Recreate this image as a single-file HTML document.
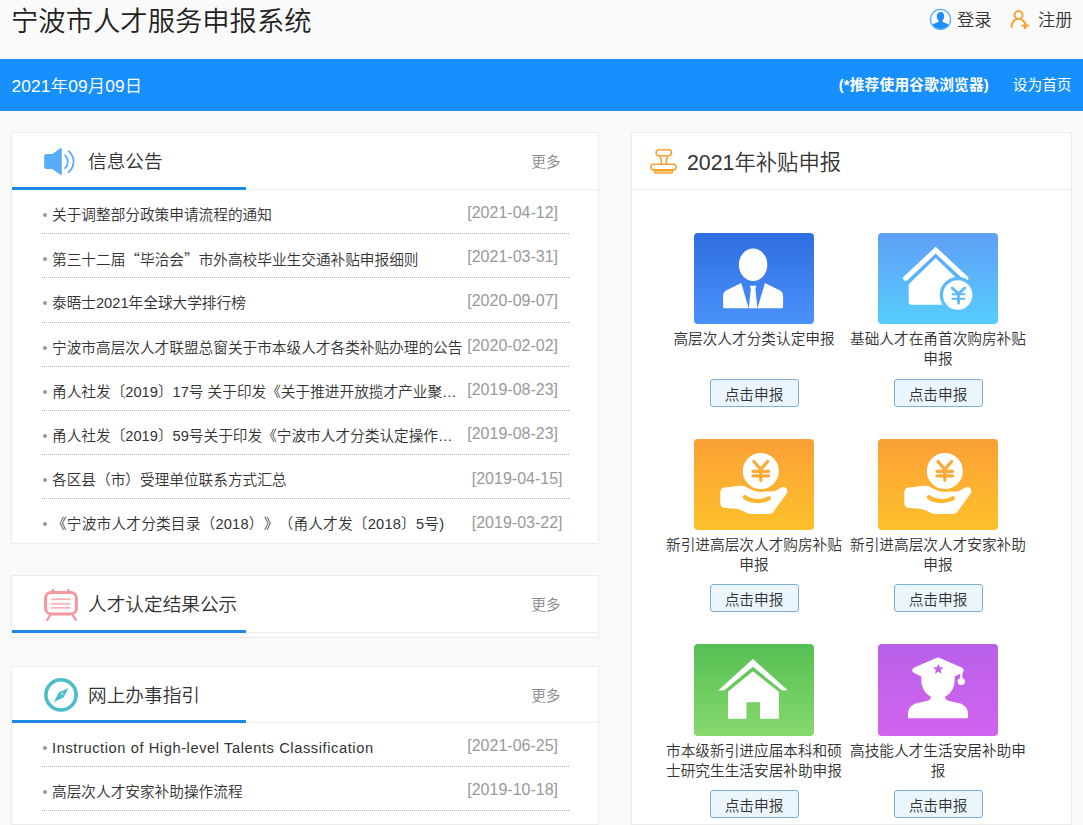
<!DOCTYPE html>
<html lang="zh-CN">
<head>
<meta charset="utf-8">
<title>宁波市人才服务申报系统</title>
<style>
*{box-sizing:border-box;margin:0;padding:0}
html,body{width:1083px;height:825px;overflow:hidden}
body{background:#fafafa;font-family:"Liberation Sans","Noto Sans CJK SC",sans-serif;color:#333;position:relative;font-weight:350;text-spacing-trim:space-all}
.cjk{font-family:"Noto Sans CJK SC",sans-serif}
a{color:inherit;text-decoration:none}
ul{list-style:none}

/* top header */
.top{position:absolute;left:0;top:0;width:1083px;height:59px}
.top h1{position:absolute;left:11px;top:2px;font-size:27.33px;font-weight:350;line-height:40px;color:#222;white-space:nowrap}
.top .acts{position:absolute;right:0;top:0;height:40px}
.top .act{position:absolute;top:8px;height:24px;font-size:17.33px;line-height:24px;color:#333;white-space:nowrap}
.top .act svg{position:absolute;left:0;top:0}

/* blue bar */
.bar{position:absolute;left:0;top:59px;width:1083px;height:52px;background:#1790fe;color:#fff;font-size:16px;line-height:52px}
.bar .date{position:absolute;left:11.500px;top:1px;font-size:17.33px;letter-spacing:.15px}
.bar .tip{position:absolute;right:94px;top:0;font-size:14.67px;font-weight:700;letter-spacing:.25px}
.bar .home{position:absolute;right:11.500px;top:0;font-size:14.67px;font-weight:400}

/* panels */
.panel{position:absolute;background:#fff;border:1px solid #ececec}
.panel .hd{position:relative;height:57px;border-bottom:1px solid #ececec}
.panel .hd .ico{position:absolute;left:31px;top:13px}
.panel .hd h2{position:absolute;left:76px;top:1px;font-size:18.67px;font-weight:350;line-height:56px;color:#333;white-space:nowrap}
.panel .hd .more{position:absolute;right:37.5px;top:1px;font-size:14.67px;line-height:56px;color:#888}
.panel .hd .ul{position:absolute;left:0;bottom:-1px;width:234px;height:3px;background:#1e88e5}

.list{margin:0 29px 0 30px}
.list li{position:relative;height:44.18px;border-bottom:1px dotted #b0b0b0;font-size:14.67px;line-height:20px;color:#333;white-space:nowrap}
.list.trim li:last-child{border-bottom:none}
.list li .dot{position:absolute;left:1px;top:23px;width:4px;height:4px;border-radius:50%;background:#999}
.list li .t{position:absolute;left:10px;top:15px;max-width:412px;overflow:hidden;text-overflow:ellipsis}
.list li .d{position:absolute;right:11px;top:13px;font-size:16px;color:#999}

/* right */
.right .hd h2{left:55px;top:2px;font-size:21.33px}
.right .hd .ico{left:17px;top:14px}
.card{position:absolute;width:184px;text-align:center}
.card .img{display:block;margin:0 auto;width:120px;height:91px;border-radius:4px;position:relative;overflow:hidden}
.card .img svg{position:absolute;left:0;top:0}
.card .lb{display:block;margin-top:5px;font-size:14.67px;line-height:20px;color:#333;height:40px}
.card .btn{display:block;margin:9px auto 0;width:89px;height:28px;border:1px solid #7eaed6;border-radius:3px;background:#eaf5fd;font-size:14.67px;line-height:30px;color:#333}
</style>
</head>
<body>

<div class="top">
  <h1>宁波市人才服务申报系统</h1>
  <a class="act" style="left:929px;padding-left:28px"><svg width="23" height="23" viewBox="0 0 23 23" style="top:0"><defs><clipPath id="cpu"><circle cx="11.5" cy="11.4" r="9.6"/></clipPath></defs><circle cx="11.5" cy="11.4" r="10" fill="#fff" stroke="#5aaefc" stroke-width="1.3"/><g clip-path="url(#cpu)" fill="#1e8ffb"><ellipse cx="11.5" cy="8.2" rx="3.7" ry="4.3"/><path d="M9.6 11.2h3.8v1.6c0 .9.5 1.4 1.6 1.8l2.6 1c1.3.5 2 1.3 2.2 2.6l.4 3.8H2.800l.4-3.800c.2-1.300.9-2.100 2.200-2.600l2.600-1c1.100-.4 1.600-.9 1.600-1.800z"/></g></svg>登录</a>
  <a class="act" style="left:1010px;padding-left:28px"><svg width="20.5" height="20.5" viewBox="0 0 22 22" style="top:.5px" fill="none" stroke="#f5a540" stroke-width="2.2" stroke-linecap="round"><circle cx="9.200" cy="6.400" r="4.300"/><path d="M1.600 19.300c.3-4.400 2.600-7.300 5.400-8.300M11.500 11c1.800.6 3.200 1.800 4.200 3.500"/><path d="M16.200 14.800v6M13.200 17.800h6" stroke-width="2.400"/></svg>注册</a>
</div>

<div class="bar">
  <span class="date">2021年09月09日</span>
  <span class="tip">(*推荐使用谷歌浏览器)</span>
  <a class="home">设为首页</a>
</div>

<!-- 信息公告 -->
<div class="panel" style="left:11px;top:132px;width:588px;height:412px">
  <div class="hd">
    <span class="ico" style="left:31px;top:14px"><svg width="34" height="30" viewBox="0 0 34 30"><path d="M1.100 9.400c0-1.500.8-2.400 2.300-2.400h5.800l8.200-5.700c.8-.5 1.400-.2 1.400.8v24.800c0 1-.6 1.300-1.400.8l-8.200-5.700H3.400c-1.500 0-2.300-.9-2.300-2.400z" fill="#5aacf9"/><path d="M22 8.200c3.800 3.600 3.800 9.400 0 13" fill="none" stroke="#5aacf9" stroke-width="1.700" stroke-linecap="round"/><path d="M25.600 4.200c6.600 6 6.600 15 0 21" fill="none" stroke="#5aacf9" stroke-width="1.800" stroke-linecap="round"/></svg></span>
    <h2>信息公告</h2>
    <a class="more">更多</a>
    <i class="ul"></i>
  </div>
  <ul class="list trim">
    <li><i class="dot"></i><a class="t">关于调整部分政策申请流程的通知</a><span class="d">[2021-04-12]</span></li>
    <li><i class="dot"></i><a class="t">第三十二届<span class="cjk">“</span>毕洽会<span class="cjk">”</span>市外高校毕业生交通补贴申报细则</a><span class="d">[2021-03-31]</span></li>
    <li><i class="dot"></i><a class="t">泰晤士2021年全球大学排行榜</a><span class="d">[2020-09-07]</span></li>
    <li><i class="dot"></i><a class="t">宁波市高层次人才联盟总窗关于市本级人才各类补贴办理的公告</a><span class="d">[2020-02-02]</span></li>
    <li><i class="dot"></i><a class="t">甬人社发〔2019〕17号 关于印发《关于推进开放揽才产业聚智的若干意见》的通知</a><span class="d">[2019-08-23]</span></li>
    <li><i class="dot"></i><a class="t">甬人社发〔2019〕59号关于印发《宁波市人才分类认定操作细则》的通知</a><span class="d">[2019-08-23]</span></li>
    <li><i class="dot"></i><a class="t">各区县（市）受理单位联系方式汇总</a><span class="d" style="right:6.5px;top:14px">[2019-04-15]</span></li>
    <li><i class="dot"></i><a class="t" style="letter-spacing:.2px">《宁波市人才分类目录（2018）》（甬人才发〔2018〕5号)</a><span class="d" style="right:6.5px;top:14px">[2019-03-22]</span></li>
  </ul>
</div>

<!-- 人才认定结果公示 -->
<div class="panel" style="left:11px;top:575px;width:588px;height:63px">
  <div class="hd">
    <span class="ico" style="left:31px;top:12px"><svg width="38" height="36" viewBox="0 0 38 36" fill="none" stroke="#f4979f" stroke-linecap="round"><rect x="2.600" y="4.500" width="30.800" height="21.400" rx="5.500" stroke-width="3"/><path d="M10 3.200V2.300M25.500 3.200V2.300" stroke-width="2.600"/><path d="M7.300 27.200L4.200 31.800M29.800 27.200l3 4.600" stroke-width="2.200"/><path d="M8.600 11.200h18.400M8.600 15.800h18.400M8.600 19.900h18.400" stroke-width="1.300"/></svg></span>
    <h2>人才认定结果公示</h2>
    <a class="more">更多</a>
    <i class="ul"></i>
  </div>
</div>

<!-- 网上办事指引 -->
<div class="panel" style="left:11px;top:666px;width:588px;height:159px">
  <div class="hd" style="height:56px">
    <span class="ico" style="left:31px;top:10px"><svg width="38" height="36" viewBox="0 0 38 36"><circle cx="18" cy="17.900" r="15.100" fill="none" stroke="#4bbccb" stroke-width="3.600"/><path d="M25.300 10.900L20.600 20.400 10.900 25 15.800 15.400z" fill="#4bbccb"/><circle cx="19.200" cy="16.800" r="1" fill="#d9fbff"/></svg></span>
    <h2>网上办事指引</h2>
    <a class="more">更多</a>
    <i class="ul"></i>
  </div>
  <ul class="list">
    <li><i class="dot"></i><a class="t" style="letter-spacing:.58px">Instruction of High-level Talents Classification</a><span class="d">[2021-06-25]</span></li>
    <li><i class="dot"></i><a class="t">高层次人才安家补助操作流程</a><span class="d">[2019-10-18]</span></li>
  </ul>
</div>

<!-- 2021年补贴申报 -->
<div class="panel right" style="left:631px;top:132px;width:441px;height:693px">
  <div class="hd">
    <span class="ico" style="left:16px;top:14px"><svg width="34" height="30" viewBox="0 0 34 30" fill="none" stroke="#f7a136" stroke-width="1.600" stroke-linejoin="round"><path d="M6.200 23.700h18.600l-.9 2.500H7.100z" fill="#fdd98c" stroke-width="1.300"/><rect x="8.100" y="2.800" width="15.400" height="5.900" rx="2.900"/><path d="M11.600 8.900c1 1.500 1.700 2.600 1.700 4.600v3.400M20 8.900c-1 1.500-1.700 2.600-1.700 4.600v3.400"/><rect x="2.800" y="17.200" width="25.300" height="5.700" rx="2.800"/></svg></span>
    <h2>2021年补贴申报</h2>
  </div>
  <div class="card" style="left:30px;top:100px"><span class="img" style="background:linear-gradient(#2f6de0,#4a92fb)"><svg width="120" height="91" viewBox="0 0 120 91" fill="#fff"><ellipse cx="59.100" cy="31.700" rx="14.200" ry="16.300"/><path d="M47.300 50L54.600 75.200H30.600c-1 0-1.500-.5-1.500-1.500V63c0-3 1.300-4.800 4-6z"/><path d="M70.900 50L63.600 75.200h24c1 0 1.500-.5 1.500-1.500V63c0-3-1.300-4.800-4-6z"/><path d="M55.900 52.700h6.400l-.9 3.300 2 19.200h-8.600l2-19.200z"/></svg></span><span class="lb">高层次人才分类认定申报</span><a class="btn" style="margin-top:10px">点击申报</a></div>
  <div class="card" style="left:214px;top:100px"><span class="img" style="background:linear-gradient(#5f9ff8,#56cdfb)"><svg width="120" height="91" viewBox="0 0 120 91"><defs><mask id="mk2"><rect width="120" height="91" fill="#fff"/><circle cx="79.700" cy="62" r="18" fill="#000"/></mask></defs><g mask="url(#mk2)"><path d="M27.600 45.300L57.700 17.200 87.900 45.300" fill="none" stroke="#fff" stroke-width="5" stroke-linecap="round" stroke-linejoin="miter"/><path d="M57.700 25L84.700 51.300V69.300c0 1.600-.8 2.400-2.400 2.400H33.100c-1.600 0-2.400-.8-2.400-2.400V51.300z" fill="#fff"/></g><circle cx="79.700" cy="62" r="14.700" fill="#fff"/><path d="M74.200 54.900L80.500 60.600 86.800 54.900M80.500 60.600V70.200" fill="none" stroke="#58b8f9" stroke-width="2.700" stroke-linecap="round"/><path d="M74.500 61.200h12M74.500 65.800h12" fill="none" stroke="#58b8f9" stroke-width="2" stroke-linecap="round"/></svg></span><span class="lb">基础人才在甬首次购房补贴申报</span><a class="btn" style="margin-top:10px">点击申报</a></div>
  <div class="card" style="left:30px;top:306px"><span class="img" style="background:linear-gradient(#fba036,#fdc12b)"><svg width="120" height="91" viewBox="0 0 120 91"><defs><mask id="mkH"><rect width="120" height="91" fill="#fff"/><circle cx="66.800" cy="32" r="20.700" fill="#000"/><path d="M50.800 58.300c6.500 4.600 16.500 5 24 1" fill="none" stroke="#000" stroke-width="4.200" stroke-linecap="round"/></mask></defs><path mask="url(#mkH)" d="M26.300 54c0-3.300 1.500-5 4.700-5.400l15-1.800c3-.3 5 .3 7 1.700l9 4h18l6.500-3.600c2-1.300 4-1.400 5.700.4 1.500 1.600 1.600 3.400.5 5.200L80 72c-1.300 2.100-3 3-5.500 3H58c-3 0-5.500-1-8-2.400-3.500-2-7-2.900-11-3.100l-8-.5c-3.200-.3-4.700-1.800-4.700-5z" fill="#fff"/><circle cx="66.800" cy="32" r="18" fill="#fff"/><path d="M60 22.500L66.800 30.500 73.600 22.500M66.800 30.500V41.300M59 32.300h15.600M59 36.800h15.600" fill="none" stroke="#fcaa33" stroke-width="3.200" stroke-linecap="round"/></svg></span><span class="lb">新引进高层次人才购房补贴申报</span><a class="btn">点击申报</a></div>
  <div class="card" style="left:214px;top:306px"><span class="img" style="background:linear-gradient(#fba036,#fdc12b)"><svg width="120" height="91" viewBox="0 0 120 91"><defs><mask id="mkH2"><rect width="120" height="91" fill="#fff"/><circle cx="66.800" cy="32" r="20.700" fill="#000"/><path d="M50.800 58.300c6.500 4.600 16.500 5 24 1" fill="none" stroke="#000" stroke-width="4.200" stroke-linecap="round"/></mask></defs><path mask="url(#mkH2)" d="M26.300 54c0-3.300 1.500-5 4.700-5.400l15-1.800c3-.3 5 .3 7 1.700l9 4h18l6.500-3.600c2-1.300 4-1.400 5.700.4 1.500 1.600 1.600 3.400.5 5.200L80 72c-1.300 2.100-3 3-5.500 3H58c-3 0-5.500-1-8-2.400-3.500-2-7-2.900-11-3.100l-8-.5c-3.200-.3-4.700-1.800-4.700-5z" fill="#fff"/><circle cx="66.800" cy="32" r="18" fill="#fff"/><path d="M60 22.500L66.800 30.500 73.600 22.500M66.800 30.500V41.300M59 32.300h15.600M59 36.800h15.600" fill="none" stroke="#fcaa33" stroke-width="3.200" stroke-linecap="round"/></svg></span><span class="lb">新引进高层次人才安家补助申报</span><a class="btn">点击申报</a></div>
  <div class="card" style="left:30px;top:511px"><span class="img" style="height:92px;background:linear-gradient(#55bf53,#86d96d)"><svg width="120" height="91" viewBox="0 0 120 91" fill="#fff"><path d="M24.400 46.300L58.900 15.100 93.700 46.300 88 46.600 58.900 22.700 30 46.600z"/><path d="M58.900 27.300L84.900 47.800V74.700H66V58.300H52.400V74.700H34V47.800z"/></svg></span><span class="lb">市本级新引进应届本科和硕士研究生生活安居补助申报</span><a class="btn">点击申报</a></div>
  <div class="card" style="left:214px;top:511px"><span class="img" style="height:92px;background:linear-gradient(#b860ea,#d264ee)"><svg width="120" height="91" viewBox="0 0 120 91" fill="#fff"><path d="M60 13.600C60.900 13.600 61.600 13.800 62.400 14.200L83.600 23.400C86.400 24.600 86.400 27.700 83.800 29L76.700 32.400V35.500C76.700 43.500 73 49.500 67.300 52.500V55H52.700V52.500C47 49.500 43.300 43.500 43.300 35.500V32.400L36.200 29C33.600 27.700 33.600 24.600 36.400 23.400L57.600 14.200C58.400 13.800 59.100 13.600 60 13.600Z"/><path d="M83.300 26v9" stroke="#fff" stroke-width="2.200" fill="none"/><circle cx="83.300" cy="37.500" r="3.600"/><path d="M52.700 54.500h14.600c1 1.600 2.500 2.300 5 2.800l8 1.600c6 1.200 9.700 5 9.700 11.100v4.200H30v-4.200c0-6.100 3.700-9.900 9.700-11.100l8-1.600c2.500-.5 4-1.200 5-2.800z"/><path d="M60.300 19.700l1.500 3.500 3.800.3-2.900 2.500.9 3.700-3.300-2-3.300 2 .9-3.700-2.900-2.500 3.800-.3z" fill="#bd64ea"/></svg></span><span class="lb">高技能人才生活安居补助申报</span><a class="btn">点击申报</a></div>
</div>

</body>
</html>
